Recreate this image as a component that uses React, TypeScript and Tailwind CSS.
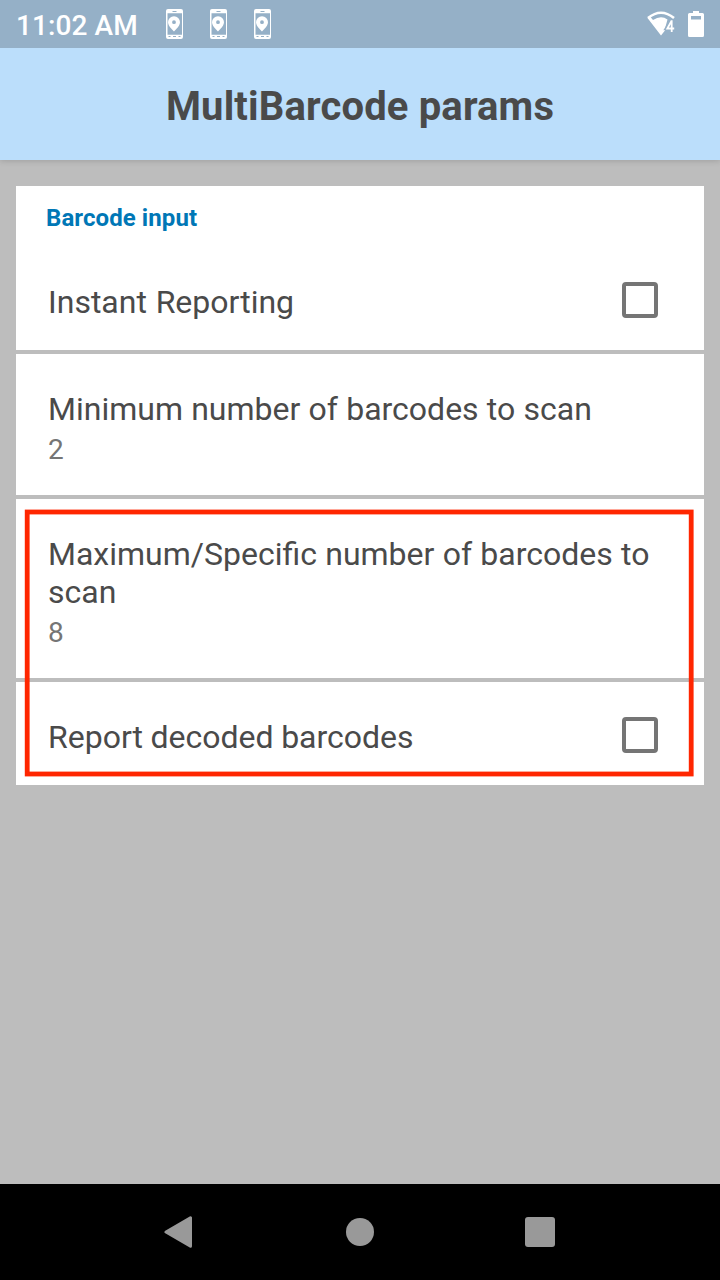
import type { ReactNode } from "react";

function PhonePin() {
  return (
    <svg width="18" height="32" viewBox="0 0 18 32" className="block">
      <path
        fillRule="evenodd"
        fill="#fff"
        d="M2 1H15a2 2 0 0 1 2 2V29a2 2 0 0 1-2 2H2a2 2 0 0 1-2-2V3a2 2 0 0 1 2-2ZM1.500 5.200V26.700H16V5.200ZM6.500 3V4H10.500V3ZM2.500 28V29H4.500V28ZM7 28V29H10V28ZM12.500 28V29H14.500V28Z"
      />
      <path
        fillRule="evenodd"
        fill="#fff"
        d="M8 8.300a6 6 0 0 1 6 6c0 4-6 9.200-6 9.200S2 18.300 2 14.300a6 6 0 0 1 6-6ZM8 12.300a1.900 1.900 0 1 0 0 3.800a1.900 1.900 0 0 0 0-3.800Z"
      />
    </svg>
  );
}

function Wifi() {
  return (
    <svg width="30" height="26" viewBox="0 0 30 26" className="block">
      <path d="M1 7Q14 -3.500 27 7" fill="none" stroke="#fff" strokeWidth="2.600" />
      <path d="M0.500 7L3 5.500L6 9Q14 4 20.500 8.500L18 17.500H19.500L14 24.500Z" fill="#fff" />
      <path
        d="M24.500 9.500L19.500 17.500H27.500M24.800 9V21"
        fill="none"
        stroke="#95b0c7"
        strokeWidth="3.500"
      />
      <path d="M24.500 10L20.300 17.500H27.200M24.700 9.200V21" fill="none" stroke="#fff" strokeWidth="1.800" />
    </svg>
  );
}

function Battery() {
  return (
    <svg width="16" height="26" viewBox="0 0 16 26" className="block">
      <path
        fillRule="evenodd"
        fill="#fff"
        d="M5 0H11V2H14.500A1.500 1.500 0 0 1 16 3.500V24.500A1.500 1.500 0 0 1 14.500 26H1.500A1.500 1.500 0 0 1 0 24.500V3.500A1.500 1.500 0 0 1 1.500 2H5ZM3 5V8.500H13V5Z"
      />
    </svg>
  );
}

function Checkbox() {
  return <span role="checkbox" aria-checked="false" className="block size-9 rounded-[4px] border-4 border-[#757575]" />;
}

function Label({ children }: { children: ReactNode }) {
  return <div className="text-[32px] leading-[38px] text-[#4a4a4a]">{children}</div>;
}

function Value({ children }: { children: ReactNode }) {
  return <div className="mt-[5px] text-[28px] leading-[33px] text-[#757575]">{children}</div>;
}

export default function App() {
  return (
    <div className="flex h-[1280px] w-[720px] flex-col overflow-hidden bg-[#bdbdbd] font-['Roboto',sans-serif]">
      <header className="relative shadow-[0_1px_6px_rgba(0,0,0,0.16)]">
        <div className="flex h-12 items-center justify-between bg-[#95b0c7] px-4">
          <div className="flex items-center">
            <span className="w-[150px] pt-[3px] text-[28px] leading-8 font-medium tracking-[0.1px] whitespace-nowrap text-white">
              11:02 AM
            </span>
            <div className="flex gap-[26px]">
              <PhonePin />
              <PhonePin />
              <PhonePin />
            </div>
          </div>
          <div className="flex items-center gap-[11px]">
            <Wifi />
            <Battery />
          </div>
        </div>
        <div className="flex h-28 items-center justify-center bg-[#bbdefb]">
          <h1 className="pt-1.5 text-[40px] leading-[46px] font-bold tracking-[0.15px] text-[#4a4a4a]">
            MultiBarcode params
          </h1>
        </div>
      </header>

      <main className="relative mx-4 mt-[26px] flex flex-col gap-1">
        <section className="h-[164px] bg-white pt-[17px] pr-[46px] pl-8">
          <h2 className="-ml-0.5 text-[24px] leading-[30px] font-bold tracking-[0.08px] text-[#0077b6]">
            Barcode input
          </h2>
          <div className="mt-[49px] flex items-start justify-between">
            <div className="pt-px [word-spacing:0.8px]">
              <Label>Instant Reporting</Label>
            </div>
            <Checkbox />
          </div>
        </section>
        <section className="h-[141px] bg-white px-8 pt-9 [word-spacing:0.3px]">
          <Label>Minimum number of barcodes to scan</Label>
          <Value>2</Value>
        </section>
        <section className="h-[179px] bg-white px-8 pt-9 [word-spacing:0.35px]">
          <Label>Maximum/Specific number of barcodes to scan</Label>
          <Value>8</Value>
        </section>
        <section className="flex h-[103px] items-start justify-between bg-white pt-[35px] pr-[46px] pl-8">
          <div className="pt-px [word-spacing:-0.4px]">
            <Label>Report decoded barcodes</Label>
          </div>
          <Checkbox />
        </section>
        <svg width="688" height="599" viewBox="0 0 688 599" className="pointer-events-none absolute top-0 left-0">
          <rect x="11.200" y="326" width="664" height="262" fill="none" stroke="#ff2600" strokeWidth="4.800" />
        </svg>
      </main>

      <nav className="mt-auto grid h-24 grid-cols-[180px_180px_180px] place-items-center bg-black px-[90px]">
        <svg width="32" height="36" viewBox="0 0 32 36">
          <path d="M2 18L26.500 3.700V32.300Z" fill="#999" stroke="#999" strokeWidth="3" strokeLinejoin="round" />
        </svg>
        <span className="size-7 rounded-full bg-[#999]" />
        <span className="size-[30px] rounded-[3px] bg-[#999]" />
      </nav>
    </div>
  );
}
